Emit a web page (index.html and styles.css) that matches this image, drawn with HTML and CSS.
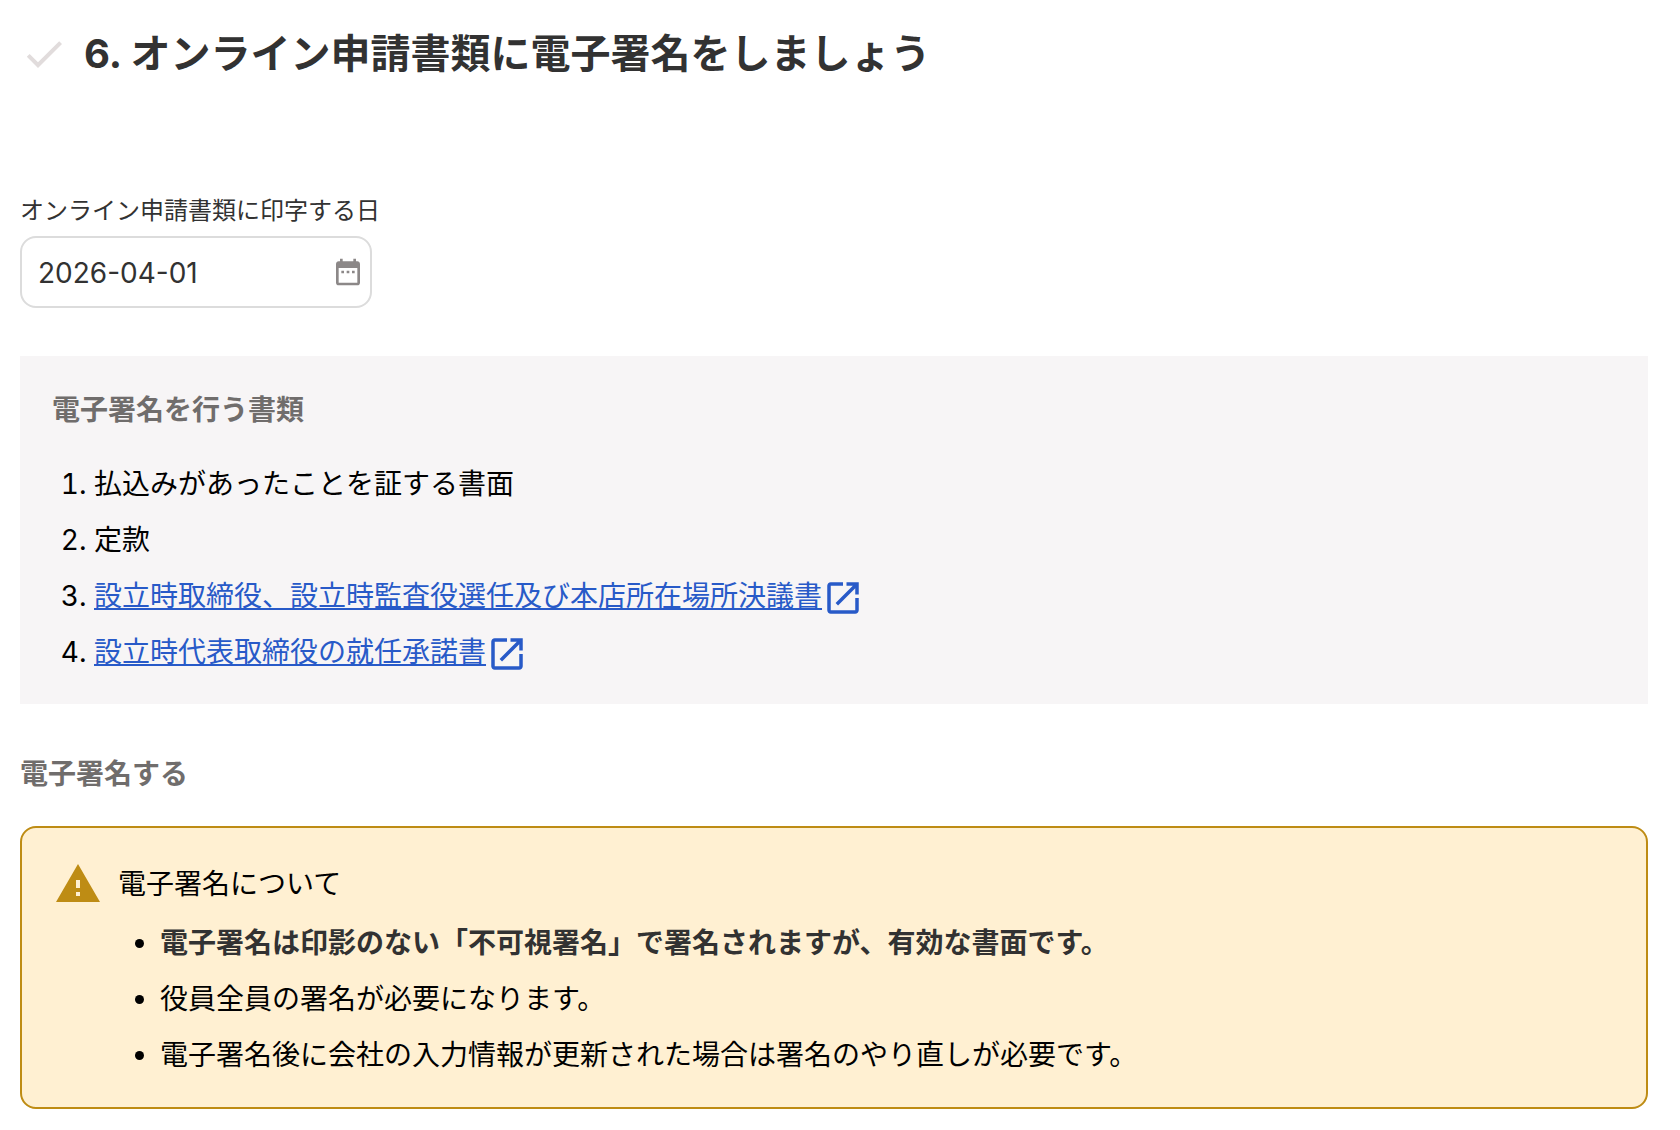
FILE: index.html
```html
<!DOCTYPE html>
<html lang="ja">
<head>
    <meta charset="UTF-8">
    <meta name="viewport" content="width=device-width, initial-scale=1.0">
    <title>オンライン申請書類に電子署名をしましょう</title>
    <link rel="stylesheet" href="styles.css">
</head>
<body>
    <main class="step">
        <div class="step-header">
            <svg class="step-check" viewBox="0 0 24 24" aria-hidden="true">
                <path d="M9 16.17 4.83 12l-1.42 1.41L9 19 21 7l-1.41-1.41z"/>
            </svg>
            <h1 class="step-title">6. オンライン申請書類に電子署名をしましょう</h1>
        </div>

        <div class="form-group">
            <label for="print-date">オンライン申請書類に印字する日</label>
            <div class="date-field">
                <input type="text" id="print-date" name="print_date" value="2026-04-01">
                <button type="button" class="date-button" aria-label="カレンダーを開く">
                    <svg viewBox="0 0 24 24" aria-hidden="true">
                        <path d="M9 11H7v2h2v-2zm4 0h-2v2h2v-2zm4 0h-2v2h2v-2zm2-7h-1V2h-2v2H8V2H6v2H5c-1.11 0-1.99.9-1.99 2L3 20c0 1.1.89 2 2 2h14c1.1 0 2-.9 2-2V6c0-1.1-.9-2-2-2zm0 16H5V9h14v11z"/>
                    </svg>
                </button>
            </div>
        </div>

        <section class="documents">
            <h2 class="sub-title">電子署名を行う書類</h2>
            <ol class="document-list">
                <li>払込みがあったことを証する書面</li>
                <li>定款</li>
                <li>
                    <a href="#" class="document-link"><span>設立時取締役、設立時監査役選任及び本店所在場所決議書</span><svg class="link-icon" viewBox="0 0 24 24" aria-hidden="true"><path d="M19 19H5V5h7V3H5c-1.11 0-2 .9-2 2v14c0 1.1.89 2 2 2h14c1.1 0 2-.9 2-2v-7h-2v7zM14 3v2h3.59l-9.83 9.83 1.41 1.41L19 6.41V10h2V3h-7z"/></svg></a>
                </li>
                <li>
                    <a href="#" class="document-link"><span>設立時代表取締役の就任承諾書</span><svg class="link-icon" viewBox="0 0 24 24" aria-hidden="true"><path d="M19 19H5V5h7V3H5c-1.11 0-2 .9-2 2v14c0 1.1.89 2 2 2h14c1.1 0 2-.9 2-2v-7h-2v7zM14 3v2h3.59l-9.83 9.83 1.41 1.41L19 6.41V10h2V3h-7z"/></svg></a>
                </li>
            </ol>
        </section>

        <section class="sign">
            <h2 class="sub-title">電子署名する</h2>
            <div class="notice">
                <svg class="notice-icon" viewBox="0 0 24 24" aria-hidden="true">
                    <path d="M1 21h22L12 2 1 21zm12-3h-2v-2h2v2zm0-4h-2v-4h2v4z"/>
                </svg>
                <div class="notice-body">
                    <p class="notice-title">電子署名について</p>
                    <ul class="notice-list">
                        <li><strong>電子署名は印影のない「不可視署名」で署名されますが、有効な書面です。</strong></li>
                        <li>役員全員の署名が必要になります。</li>
                        <li>電子署名後に会社の入力情報が更新された場合は署名のやり直しが必要です。</li>
                    </ul>
                </div>
            </div>
        </section>
    </main>
</body>
</html>
```

FILE: styles.css
```css
* {
    box-sizing: border-box;
}
body {
    margin: 0;
    background-color: #fff;
    color: #000;
    font-family: Inter, "Noto Sans CJK JP", sans-serif;
    font-size: 28px;
    line-height: 56px;
}
h1, h2, p, ol, ul {
    margin: 0;
}
.step {
    padding: 24px 32px 20px 20px;
}

/* 見出し */
.step-header {
    display: flex;
    align-items: center;
    gap: 16px;
    margin-bottom: 108px;
}
.step-check {
    flex: none;
    width: 48px;
    height: 48px;
    fill: #e1dcdc;
}
.step-title {
    color: #323232;
    font-size: 40px;
    line-height: 60px;
}
.sub-title {
    color: #706d6c;
    font-size: 28px;
    line-height: 44px;
}

/* 日付入力 */
.form-group {
    margin-bottom: 48px;
}
.form-group label {
    display: block;
    margin-bottom: 6px;
    color: #323232;
    font-size: 24px;
    line-height: 38px;
}
.date-field {
    position: relative;
    width: 352px;
}
.date-field input {
    display: block;
    width: 100%;
    height: 72px;
    padding: 2px 48px 0 16px;
    border: 2px solid #dcdcdc;
    border-radius: 16px;
    background-color: #fff;
    color: #323232;
    font-family: inherit;
    font-size: 28px;
}
.date-button {
    position: absolute;
    top: 20px;
    right: 8px;
    width: 32px;
    height: 32px;
    padding: 0;
    border: none;
    background: none;
    cursor: pointer;
}
.date-button svg {
    display: block;
    fill: #8c8888;
}

/* 書類一覧 */
.documents {
    margin-bottom: 48px;
    padding: 32px 32px 24px;
    background-color: #f7f5f6;
}
.document-list {
    margin-top: 24px;
    padding-left: 42px;
}
.document-link {
    display: inline-flex;
    align-items: center;
    color: #285ac8;
    vertical-align: top;
}
.link-icon {
    width: 42px;
    height: 42px;
    margin-top: 4px;
    fill: #285ac8;
}

/* 注意書き */
.notice {
    display: flex;
    gap: 16px;
    margin-top: 30px;
    padding: 32px 32px 24px;
    border: 2px solid #be8c14;
    border-radius: 16px;
    background-color: #fff0d2;
}
.notice-icon {
    flex: none;
    width: 48px;
    height: 48px;
    fill: #be8c14;
}
.notice-title {
    line-height: 48px;
}
.notice-list {
    margin-top: 7px;
    padding-left: 42px;
}
.notice-list strong {
    color: #323232;
}
```
